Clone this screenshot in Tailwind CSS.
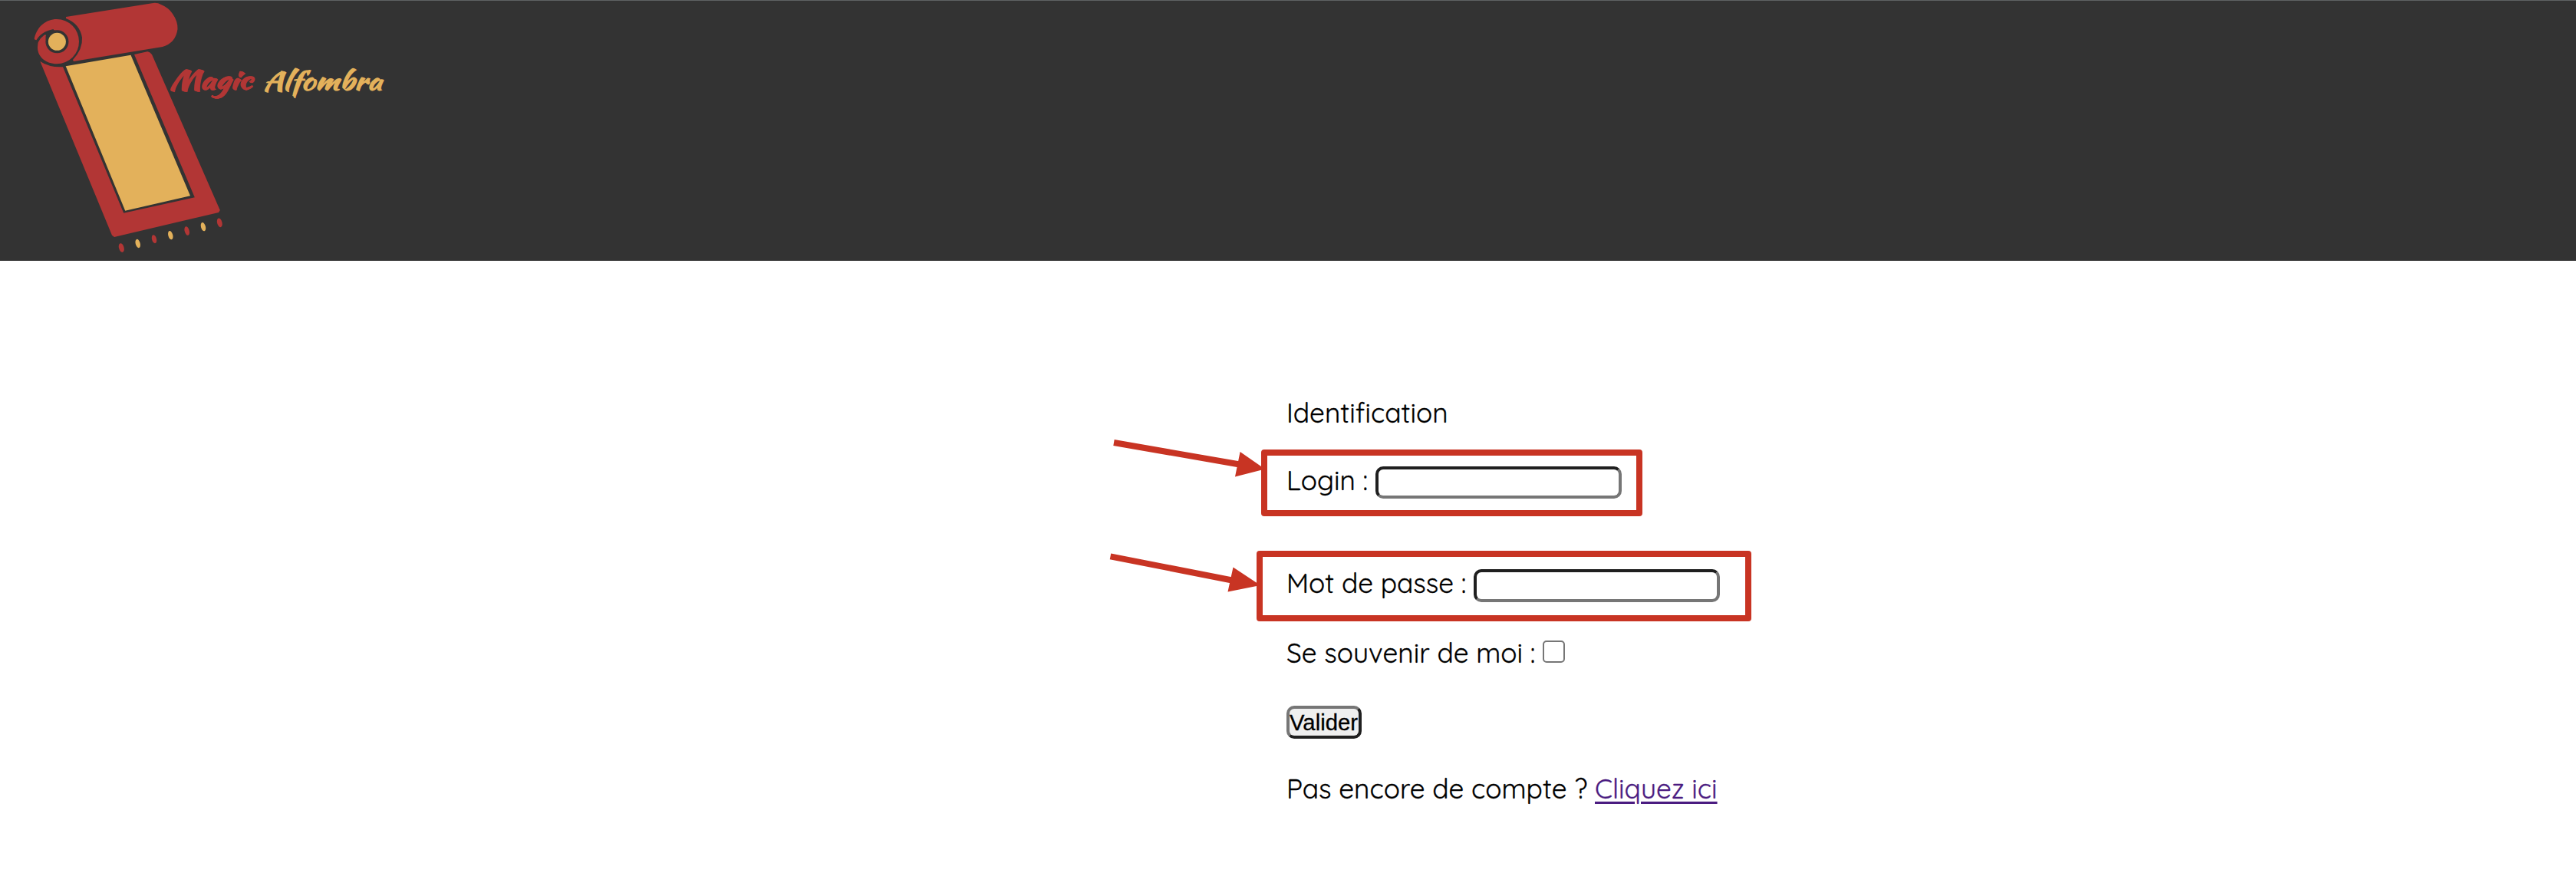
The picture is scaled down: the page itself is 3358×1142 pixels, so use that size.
<!DOCTYPE html>
<html lang="fr">
<head>
<meta charset="utf-8">
<title>Magic Alfombra</title>
<script src="https://cdn.jsdelivr.net/npm/@tailwindcss/browser@4"></script>
</head>
<body class="relative h-[1142px] overflow-hidden bg-white font-['Quicksand','Lato',sans-serif] text-[35.2px] leading-[44px] text-black">
<header class="h-[340px] border-t border-[#5f6263] bg-[#333]">
  <svg class="-mt-px block" width="540" height="340" viewBox="0 0 540 340">
    <path stroke="#5f6263" d="M0 .5H540"/>
    <g fill="#b23635">
      <path d="M86 22L198 4.200Q205 3 210 6Q220 10 225 18Q232 28 231.500 38Q229 56 212 61L96 80L95 78Q108 64 107 49Q104 31 86 24Z"/>
      <path d="M52.300 80Q64 88 82 87.300L161.200 277.700L253.800 257.300L175 71L192 67.300Q195 67 198 71L286.800 274L285 277L149 309L146 306.700Z"/>
      <path d="M45 49C49 34 60 25 74 25A29 29 0 0 1 103 54A29 29 0 0 1 74 83.300C60 83.300 49 74 49 62C49 57 51 54 47 52Q44 52 45 49Z"/>
    </g>
    <path fill="#e3b15b" d="M85.700 86.300L170.500 71.700L248 255.300L163.200 274.700Z"/>
    <path fill="none" stroke="#333" stroke-width="3.200" d="M47.500 55.500C51 48 58 41.500 70 39.500"/>
    <path fill="#333" d="M58 44L72 39L63 55L60 53Q59 48 60 46Z"/>
    <circle cx="74.400" cy="54.300" r="15" fill="#333"/>
    <circle cx="74.400" cy="54.300" r="11.500" fill="#e3b15b"/>
    <g fill="#b23635">
      <ellipse cx="158.300" cy="323" rx="3.300" ry="6" transform="rotate(-15 158.300 323)"/>
      <ellipse cx="201" cy="311.700" rx="3" ry="5.600" transform="rotate(-15 201 311.700)"/>
      <ellipse cx="243.700" cy="301" rx="3" ry="6" transform="rotate(-15 243.700 301)"/>
      <ellipse cx="286.300" cy="290.300" rx="3.200" ry="6" transform="rotate(-15 286.300 290.300)"/>
    </g>
    <g fill="#e3b15b">
      <ellipse cx="179.700" cy="317.500" rx="3" ry="5.800" transform="rotate(-15 179.700 317.500)"/>
      <ellipse cx="222.300" cy="306.700" rx="3" ry="5.800" transform="rotate(-15 222.300 306.700)"/>
      <ellipse cx="265" cy="295.700" rx="3" ry="5.800" transform="rotate(-15 265 295.700)"/>
    </g>
    <g class="font-['Forte','Kaushan_Script','Lato',cursive] text-[34px] font-bold">
      <text x="221" y="116" textLength="107" lengthAdjust="spacingAndGlyphs" fill="#b23635" stroke="#b23635" stroke-width=".6">Magic</text>
      <text x="343" y="117" textLength="155" lengthAdjust="spacingAndGlyphs" fill="#e3b15b">Alfombra</text>
    </g>
  </svg>
</header>

<main class="flex flex-col items-start pt-[176px] pl-[1677px] whitespace-nowrap [-webkit-text-stroke:0.3px]">
  <h1>Identification</h1>
  <div class="mt-11 flex h-11 items-start">
    <label for="login" class="w-[116px]">Login :</label>
    <input id="login" class="mt-1 h-[42px] w-[321px] rounded-[10px] border-4 border-t-[#1f1f1f] border-r-[#767676] border-b-[#767676] border-l-[#1f1f1f] bg-white">
  </div>
  <div class="mt-[90px] flex h-11 items-start">
    <label for="pass" class="w-[244px]">Mot de passe :</label>
    <input id="pass" type="password" class="mt-1 h-[43px] w-[321px] rounded-[10px] border-4 border-t-[#1f1f1f] border-r-[#767676] border-b-[#767676] border-l-[#1f1f1f] bg-white">
  </div>
  <div class="mt-[47px] flex h-11 items-start">
    <label for="keep" class="w-[334px]">Se souvenir de moi :</label>
    <input id="keep" type="checkbox" class="mt-1.5 size-[29px] appearance-none rounded-[5px] border-2 border-[#767676] bg-white">
  </div>
  <button class="mt-[47px] h-[43px] w-[98px] overflow-hidden rounded-[10px] border-4 border-t-[#767676] border-r-[#1f1f1f] border-b-[#1f1f1f] border-l-[#767676] bg-[#efefef] text-left font-['Liberation_Sans',sans-serif] text-[29.300px] leading-[36px]">Valider</button>
  <p class="mt-[43px]"><span class="inline-block w-[402px]">Pas encore de compte ?</span><a href="#" class="text-[#4b1c81] underline decoration-[3px] underline-offset-[4px]">Cliquez ici</a></p>
</main>

<div class="absolute top-[586px] left-[1644px] h-[87px] w-[497px] rounded-[4px] border-8 border-[#c83423]"></div>
<div class="absolute top-[718px] left-[1638px] h-[92px] w-[645px] rounded-[4px] border-8 border-[#c83423]"></div>
<svg class="absolute top-[560px] left-[1440px]" width="220" height="230" viewBox="1440 560 220 230" fill="#c83423" stroke="#c83423">
  <path stroke-width="8" d="M1452 577L1616 605.500M1447.500 725.300L1606 756.500"/>
  <path stroke="none" d="M1616.600 589L1649 611.500L1610 621.500ZM1607.500 739.500L1643 763L1600.500 771.500Z"/>
</svg>
</body>
</html>
